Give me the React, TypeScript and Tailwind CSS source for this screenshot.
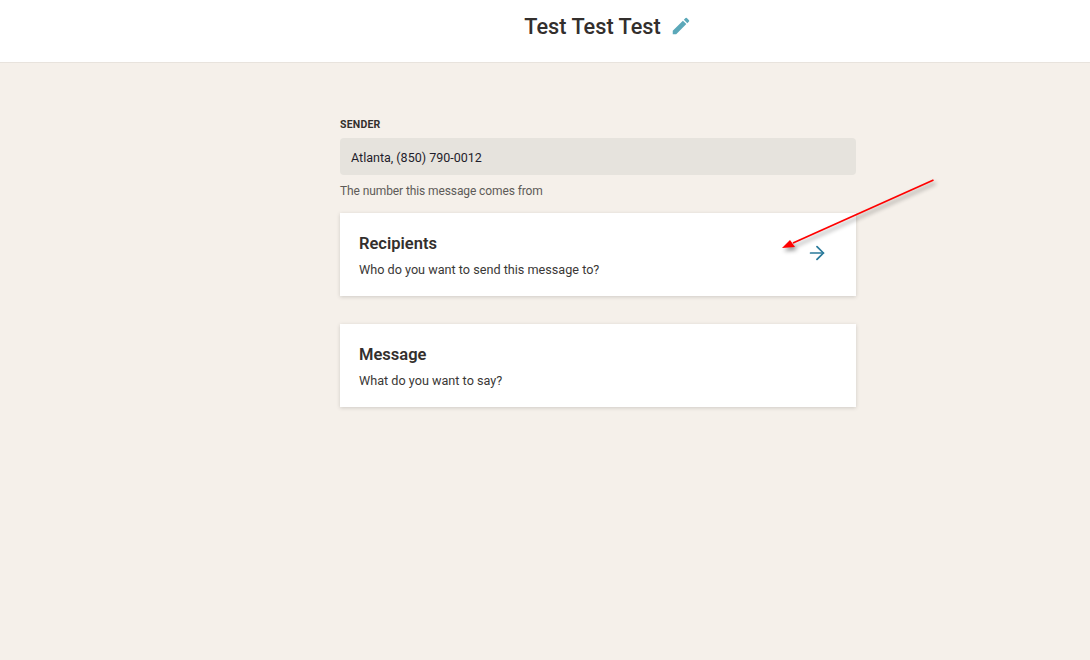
import React from 'react';
import { ArrowRight } from 'lucide-react';

function PencilIcon() {
    return (
        <svg viewBox="0 0 24 24" className="w-[22px] h-[22px] mb-[4px] text-[#5ba8b9]" fill="currentColor">
            <path d="M3 17.25V21h3.75L17.81 9.94l-3.75-3.75L3 17.25zM20.71 7.04a1 1 0 0 0 0-1.41l-2.34-2.34a1 1 0 0 0-1.41 0l-1.83 1.83 3.75 3.75 1.83-1.83z" />
        </svg>
    );
}

interface StepCardProps {
    title: string;
    description: string;
    showArrow?: boolean;
}

function StepCard({ title, description, showArrow }: StepCardProps) {
    return (
        <div className="h-[83px] bg-white shadow-[0_1px_4px_rgba(0,0,0,0.16)] pl-[19px] pr-[28px] flex items-center justify-between">
            <div className="pt-[3px]">
                <h2 className="text-[16.5px] leading-[20px] font-semibold text-[#332f2d]">{title}</h2>
                <p className="mt-[8px] text-[12.65px] leading-[16px] text-[#3a3836]">{description}</p>
            </div>
            {showArrow && <ArrowRight className="w-[22px] h-[22px] mb-[3px] text-[#2a7a9b]" strokeWidth={1.9} />}
        </div>
    );
}

export default function App() {
    return (
        <div className="relative min-h-[660px] bg-[#f5f0ea] font-['Roboto',sans-serif] overflow-hidden">
            <header className="h-[63px] bg-white border-b border-[#e8e3dd] flex items-center justify-center pl-[126px] pb-[7px] gap-[9px]">
                <h1 className="text-[21.7px] font-medium text-[#332f2d]">Test Test Test</h1>
                <PencilIcon />
            </header>

            <main className="w-[516px] ml-[340px] pt-[55px]">
                <label className="block text-[10.5px] leading-[14px] font-bold tracking-[0.2px] text-[#332f2d]">SENDER</label>
                <div className="mt-[6px] h-[37px] rounded-[4px] bg-[#e6e3dd] px-[11px] pt-[3px] flex items-center text-[12.5px] text-[#1f1d2b]">
                    Atlanta, (850) 790-0012
                </div>
                <p className="mt-[8px] text-[12px] tracking-[-0.1px] leading-[16px] text-[#5e5b58]">The number this message comes from</p>
                <div className="mt-[14px] flex flex-col gap-[28px]">
                    <StepCard title="Recipients" description="Who do you want to send this message to?" showArrow />
                    <StepCard title="Message" description="What do you want to say?" />
                </div>
            </main>

            {/* red annotation arrow pasted over the screenshot */}
            <svg className="absolute left-[775px] top-[175px] w-[165px] h-[80px] drop-shadow-[2px_3px_2px_rgba(0,0,0,0.45)]" viewBox="0 0 165 80" fill="none">
                <path d="M158.5 5 L18 68" stroke="#f00" strokeWidth="1.7" />
                <path d="M7 73 L15 65 L20 72 Z" fill="#f00" />
            </svg>
        </div>
    );
}
